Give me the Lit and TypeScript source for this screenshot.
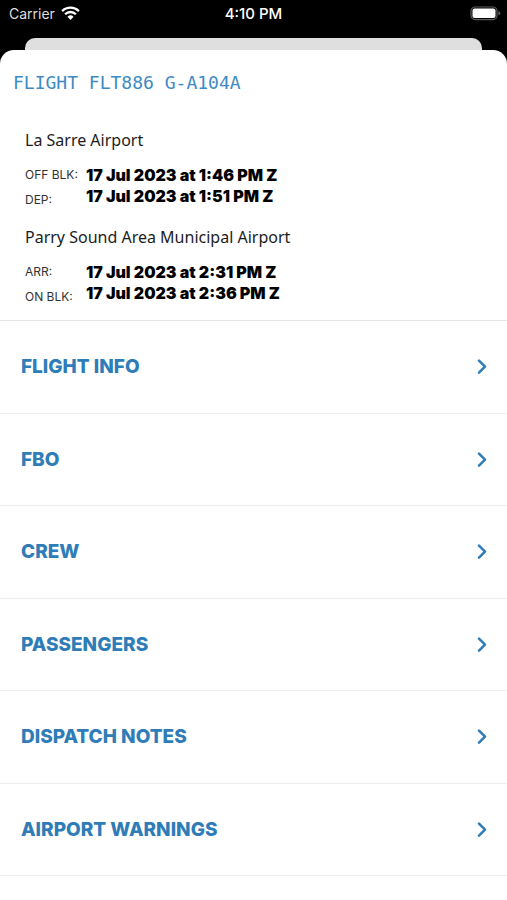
import { LitElement, html, css } from "lit";
import { customElement, property } from "lit/decorators.js";

interface Stop {
  airport: string;
  times: { label: string; value: string }[];
}

const STOPS: Stop[] = [
  {
    airport: "La Sarre Airport",
    times: [
      { label: "OFF BLK:", value: "17 Jul 2023 at 1:46 PM Z" },
      { label: "DEP:", value: "17 Jul 2023 at 1:51 PM Z" },
    ],
  },
  {
    airport: "Parry Sound Area Municipal Airport",
    times: [
      { label: "ARR:", value: "17 Jul 2023 at 2:31 PM Z" },
      { label: "ON BLK:", value: "17 Jul 2023 at 2:36 PM Z" },
    ],
  },
];

const SECTIONS = ["FLIGHT INFO", "FBO", "CREW", "PASSENGERS", "DISPATCH NOTES", "AIRPORT WARNINGS"];

@customElement("status-bar")
export class StatusBar extends LitElement {
  static styles = css`
    :host {
      display: grid;
      grid-template-columns: 1fr auto 1fr;
      align-items: center;
      height: 28px;
      padding: 0 6px;
      color: #fff;
      font: 14px/28px Inter, sans-serif;
    }
    .carrier {
      display: flex;
      align-items: center;
      gap: 6px;
      padding-left: 3px;
      color: #dedede;
    }
    .time {
      font-size: 15px;
      font-weight: 500;
    }
    .battery {
      justify-self: end;
    }
    svg {
      display: block;
    }
  `;

  render() {
    return html`
      <div class="carrier">
        <span>Carrier</span>
        <svg width="19" height="16" viewBox="0 0 19 16" aria-hidden="true">
          <g fill="none" stroke="#fff" stroke-width="2.3">
            <path d="M1.1 5.1a12 12 0 0 1 16.8 0" />
            <path d="M4.1 8.2a7.7 7.7 0 0 1 10.8 0" />
          </g>
          <path d="M6.5 10.8a4.3 4.3 0 0 1 6 0L9.5 14z" fill="#fff" />
        </svg>
      </div>
      <span class="time">4:10 PM</span>
      <svg class="battery" width="31" height="16" viewBox="0 0 31 16" aria-hidden="true">
        <rect x="1" y="1" width="26" height="12.6" rx="4" fill="none" stroke="#5c5c5c" stroke-width="1.2" />
        <rect x="2.5" y="2.5" width="23" height="9.6" rx="2" fill="#fff" />
        <path d="M28.4 5q2 .8 2 2.3t-2 2.3z" fill="#5c5c5c" />
      </svg>
    `;
  }
}

@customElement("flight-stop")
export class FlightStop extends LitElement {
  @property({ attribute: false }) stop!: Stop;

  static styles = css`
    :host {
      display: block;
    }
    h2 {
      margin: 0;
      font: 400 16px/24px "Noto Sans", sans-serif;
      color: #1c1c1c;
    }
    .times {
      display: flex;
      margin-top: 10px;
    }
    .labels {
      flex: 0 0 61px;
      font: 12px/25px Inter, sans-serif;
      color: #333;
    }
    .values {
      padding-top: 3px;
      font: 900 16px/21px Inter, sans-serif;
      color: #000;
    }
  `;

  render() {
    return html`
      <h2>${this.stop.airport}</h2>
      <div class="times">
        <div class="labels">${this.stop.times.map((t) => html`<div>${t.label}</div>`)}</div>
        <div class="values">${this.stop.times.map((t) => html`<div>${t.value}</div>`)}</div>
      </div>
    `;
  }
}

@customElement("app-root")
export class AppRoot extends LitElement {
  static styles = css`
    :host {
      display: flex;
      flex-direction: column;
      min-height: 100vh;
      background: #000;
    }
    .behind {
      height: 12px;
      margin: 10px 25px 0;
      border-radius: 10px 10px 0 0;
      background: #dfdfdf;
    }
    .sheet {
      flex: 1;
      display: flex;
      flex-direction: column;
      padding-bottom: 24px;
      border-radius: 14px 14px 0 0;
      background: #fff;
    }
    h1 {
      margin: 0;
      padding: 21px 13px 0;
      font: 400 18px/24px "DejaVu Sans Mono", monospace;
      color: #3d8ac4;
    }
    .stops {
      display: flex;
      flex-direction: column;
      gap: 13px;
      padding: 33px 25px 11px;
    }
    .sections {
      flex: 1;
      display: flex;
      flex-direction: column;
      border-top: 1px solid #e4e4e4;
    }
    .section {
      flex: 1;
      display: flex;
      align-items: center;
      justify-content: space-between;
      min-height: 72px;
      padding: 1px 18px 0 21px;
      border: 0;
      border-bottom: 1px solid #ececec;
      background: none;
      font: 800 19px/24px Inter, sans-serif;
      color: #2f7db8;
      text-align: left;
      cursor: pointer;
    }
    .chevron {
      display: block;
    }
  `;

  render() {
    return html`
      <status-bar></status-bar>
      <div class="behind"></div>
      <main class="sheet">
        <h1>FLIGHT FLT886 G-A104A</h1>
        <div class="stops">${STOPS.map((s) => html`<flight-stop .stop=${s}></flight-stop>`)}</div>
        <nav class="sections">
          ${SECTIONS.map(
            (name) => html`
              <button class="section" type="button">
                <span>${name}</span>
                <svg class="chevron" width="14" height="16" viewBox="0 0 14 16" aria-hidden="true">
                  <path d="M4 1.6l6 6-6 6" fill="none" stroke="#2f7db8" stroke-width="2.5" stroke-linecap="round" stroke-linejoin="round" />
                </svg>
              </button>
            `,
          )}
        </nav>
      </main>
    `;
  }
}
